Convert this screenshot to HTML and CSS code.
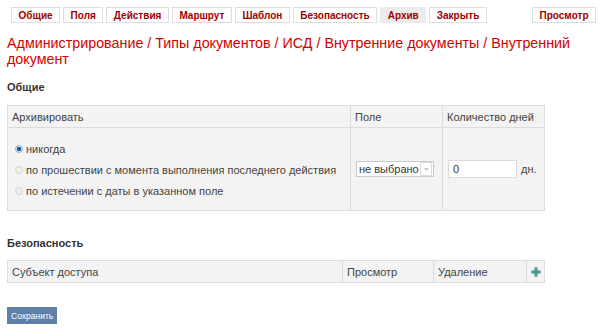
FILE: index.html
```html
<!DOCTYPE html>
<html lang="ru">
<head>
<meta charset="utf-8">
<title>Архив</title>
<link rel="stylesheet" href="styles.css">
</head>
<body>
<div class="tabs">
  <a class="tab">Общие</a>
  <a class="tab">Поля</a>
  <a class="tab">Действия</a>
  <a class="tab">Маршрут</a>
  <a class="tab">Шаблон</a>
  <a class="tab">Безопасность</a>
  <a class="tab active">Архив</a>
  <a class="tab">Закрыть</a>
  <a class="tab right">Просмотр</a>
</div>
<h1 class="title">Администрирование / Типы документов / ИСД / Внутренние документы / Внутренний документ</h1>

<h2 class="section">Общие</h2>
<table class="grid archive">
  <colgroup><col class="w1"><col class="w2"><col class="w3"></colgroup>
  <thead>
    <tr><th>Архивировать</th><th>Поле</th><th>Количество дней</th></tr>
  </thead>
  <tbody>
    <tr>
      <td class="c1">
        <label class="opt"><span class="radio checked"></span>никогда</label>
        <label class="opt"><span class="radio"></span>по прошествии с момента выполнения последнего действия</label>
        <label class="opt"><span class="radio"></span>по истечении с даты в указанном поле</label>
      </td>
      <td class="c2">
        <span class="select"><span class="select-text">не выбрано</span><span class="select-btn"><svg width="5" height="3" viewBox="0 0 5 3"><path d="M0 0H5L2.5 3Z" fill="#c8c8c8"/></svg></span></span>
      </td>
      <td class="c3">
        <span class="days"><span class="input">0</span><span class="unit">дн.</span></span>
      </td>
    </tr>
  </tbody>
</table>

<h2 class="section sec2">Безопасность</h2>
<table class="grid access">
  <colgroup><col class="x1"><col class="x2"><col class="x3"><col class="x4"></colgroup>
  <thead>
    <tr>
      <th>Субъект доступа</th>
      <th>Просмотр</th>
      <th>Удаление</th>
      <th class="addcell"><svg class="plus" width="10" height="10" viewBox="0 0 10 10"><path d="M3.5 1a0.8 0.8 0 0 1 0.8-0.8h1.4a0.8 0.8 0 0 1 0.8 0.8V3.5H9a0.8 0.8 0 0 1 0.8 0.8v1.4a0.8 0.8 0 0 1-0.8 0.8H6.5V9a0.8 0.8 0 0 1-0.8 0.8H4.3A0.8 0.8 0 0 1 3.5 9V6.5H1a0.8 0.8 0 0 1-0.8-0.8V4.3A0.8 0.8 0 0 1 1 3.5H3.5Z" fill="#469a8e"/></svg></th>
    </tr>
  </thead>
</table>

<button class="save">Сохранить</button>
</body>
</html>
```
FILE: styles.css
```css
html, body {
  margin: 0;
  padding: 0;
  background: #fff;
}
body {
  font-family: "Liberation Sans", Arial, sans-serif;
  font-size: 11px;
  color: #444;
  padding: 0 4px 0 7px;
}
.tabs {
  display: flex;
  gap: 3px;
  padding: 7px 0 0 4px;
}
.tab {
  display: block;
  height: 14px;
  line-height: 15px;
  padding: 0 6.5px;
  border: 1px solid #dedede;
  background: #fff;
  color: #9e0000;
  font-weight: bold;
  font-size: 10px;
}
.tab.active {
  background: #ececec;
  border-color: #ececec;
}
.tab.right {
  margin-left: auto;
}
.title {
  margin: 12px 0 0 0;
  font-weight: normal;
  font-size: 14.3px;
  line-height: 16px;
  color: #d40000;
}
.section {
  margin: 13px 0 0 0;
  font-size: 11px;
  font-weight: bold;
  color: #333;
  line-height: 14px;
}
.sec2 {
  margin-top: 25px;
}
.grid {
  border-collapse: collapse;
  table-layout: fixed;
  width: 537px;
  background: #f3f3f3;
}
.archive {
  margin-top: 11px;
}
.w1 { width: 343px; }
.w2 { width: 92px; }
.w3 { width: 102px; }
.x1 { width: 335px; }
.x2 { width: 91px; }
.x3 { width: 93px; }
.x4 { width: 18px; }
.grid th {
  text-align: left;
  font-weight: normal;
  color: #444;
  border: 1px solid #dcdcdc;
  height: 21px;
  padding: 0 0 0 4px;
  font-size: 11px;
  white-space: nowrap;
}
.grid td {
  border: 1px solid #dcdcdc;
  padding: 0;
  vertical-align: middle;
}
.archive td.c1 {
  padding: 10px 0 9px 6px;
}
.opt {
  display: flex;
  align-items: center;
  height: 21px;
  font-size: 11px;
  color: #444;
  white-space: nowrap;
}
.radio {
  width: 6px;
  height: 6px;
  border-radius: 50%;
  border: 1px solid #d4d4d4;
  background: #eeeeee;
  margin: 0 3px 0 1px;
  box-sizing: content-box;
}
.radio.checked {
  background: radial-gradient(circle, #1d5e9a 0 2px, #d9e6f1 2.5px);
  border-color: #9fb6cc;
}
.archive td.c2 {
  padding-left: 5px;
}
.select {
  display: flex;
  width: 76px;
  height: 14px;
  border: 1px solid #c9c9c9;
  background: #fff;
  font-size: 11px;
  color: #333;
  align-items: center;
}
.select-text {
  flex: 1;
  padding-left: 2px;
  white-space: nowrap;
}
.select-btn {
  width: 10px;
  height: 12px;
  margin-right: 1px;
  border: 1px solid #dcdcdc;
  display: flex;
  align-items: center;
  justify-content: center;
}
.archive td.c3 {
  padding-left: 5px;
}
.days {
  display: flex;
  align-items: center;
}
.input {
  display: block;
  width: 63px;
  height: 16px;
  line-height: 16px;
  padding-left: 4px;
  border: 1px solid #dcdcdc;
  background: #fff;
  font-size: 11px;
  color: #333;
}
.unit {
  margin-left: 4px;
  font-size: 11px;
}
.access {
  margin-top: 10px;
}
.grid th.addcell {
  padding: 0;
}
.plus {
  display: block;
  margin: 0 auto;
}
.save {
  display: block;
  margin-top: 24px;
  height: 17px;
  padding: 0 4px;
  border: none;
  background: #5d80a8;
  color: #fff;
  font-family: "Liberation Sans", Arial, sans-serif;
  font-size: 8.5px;
}
```
